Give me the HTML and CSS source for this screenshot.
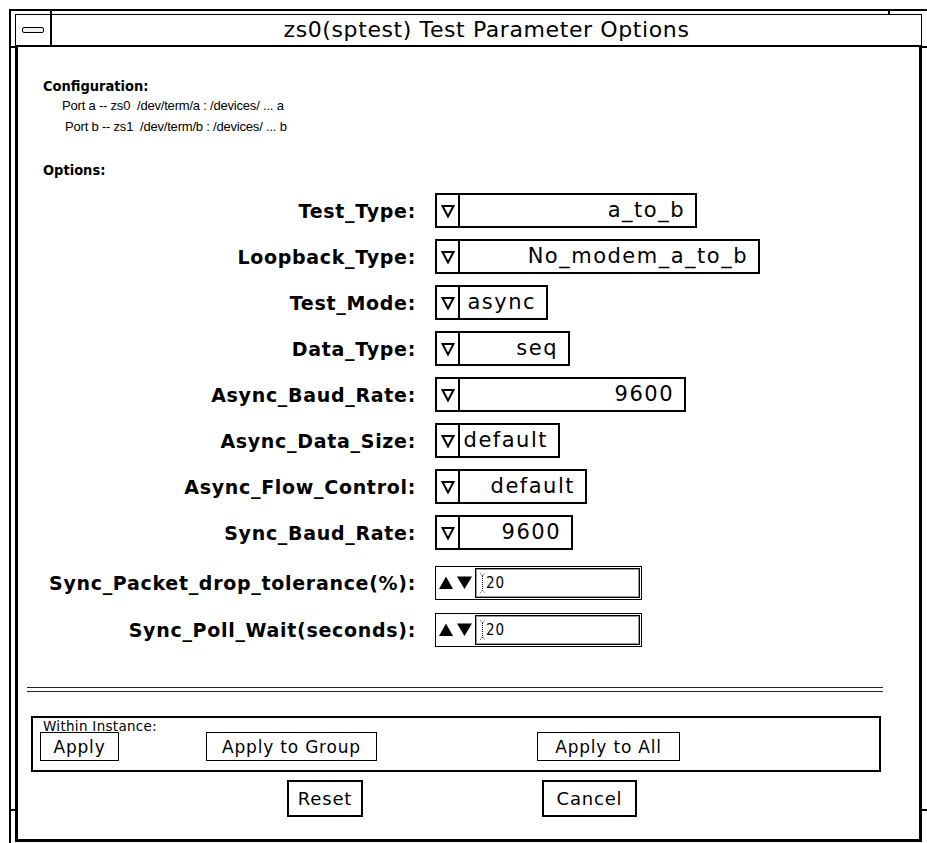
FILE: index.html
```html
<!DOCTYPE html>
<html lang="en">
<head>
    <meta charset="utf-8">
    <title>zs0(sptest) Test Parameter Options</title>
    <link rel="stylesheet" href="styles.css">
</head>
<body>
    <div class="frame">
        <span class="tick tick-top left"></span>
        <span class="tick tick-top right"></span>
        <span class="tick tick-side left upper"></span>
        <span class="tick tick-side left lower"></span>
        <span class="tick tick-side right upper"></span>
        <span class="tick tick-side right lower"></span>

        <div class="titlebar">
            <div class="menu-btn"><span></span></div>
            <div class="title">zs0(sptest) Test Parameter Options</div>
        </div>

        <div class="panel">
            <div class="config">
                <div class="heading">Configuration:</div>
                <div class="port">Port a -- zs0&nbsp; /dev/term/a : /devices/ ... a</div>
                <div class="port port-b">Port b -- zs1&nbsp; /dev/term/b : /devices/ ... b</div>
                <div class="heading options-head">Options:</div>
            </div>

            <div class="opts">
                <div class="label">Test_Type:</div>
                <div class="choice" style="width: 262px">
                    <span class="arrow"><svg width="14" height="14" viewBox="0 0 14 14"><polygon points="1.5,2 12.5,2 7,12.5" fill="none" stroke="#000" stroke-width="2"/></svg></span>
                    <span class="value">a_to_b</span>
                </div>

                <div class="label">Loopback_Type:</div>
                <div class="choice" style="width: 325px">
                    <span class="arrow"><svg width="14" height="14" viewBox="0 0 14 14"><polygon points="1.5,2 12.5,2 7,12.5" fill="none" stroke="#000" stroke-width="2"/></svg></span>
                    <span class="value">No_modem_a_to_b</span>
                </div>

                <div class="label">Test_Mode:</div>
                <div class="choice" style="width: 113px">
                    <span class="arrow"><svg width="14" height="14" viewBox="0 0 14 14"><polygon points="1.5,2 12.5,2 7,12.5" fill="none" stroke="#000" stroke-width="2"/></svg></span>
                    <span class="value">async</span>
                </div>

                <div class="label">Data_Type:</div>
                <div class="choice" style="width: 135px">
                    <span class="arrow"><svg width="14" height="14" viewBox="0 0 14 14"><polygon points="1.5,2 12.5,2 7,12.5" fill="none" stroke="#000" stroke-width="2"/></svg></span>
                    <span class="value">seq</span>
                </div>

                <div class="label">Async_Baud_Rate:</div>
                <div class="choice" style="width: 251px">
                    <span class="arrow"><svg width="14" height="14" viewBox="0 0 14 14"><polygon points="1.5,2 12.5,2 7,12.5" fill="none" stroke="#000" stroke-width="2"/></svg></span>
                    <span class="value">9600</span>
                </div>

                <div class="label">Async_Data_Size:</div>
                <div class="choice" style="width: 125px">
                    <span class="arrow"><svg width="14" height="14" viewBox="0 0 14 14"><polygon points="1.5,2 12.5,2 7,12.5" fill="none" stroke="#000" stroke-width="2"/></svg></span>
                    <span class="value">default</span>
                </div>

                <div class="label">Async_Flow_Control:</div>
                <div class="choice" style="width: 152px">
                    <span class="arrow"><svg width="14" height="14" viewBox="0 0 14 14"><polygon points="1.5,2 12.5,2 7,12.5" fill="none" stroke="#000" stroke-width="2"/></svg></span>
                    <span class="value">default</span>
                </div>

                <div class="label">Sync_Baud_Rate:</div>
                <div class="choice" style="width: 138px">
                    <span class="arrow"><svg width="14" height="14" viewBox="0 0 14 14"><polygon points="1.5,2 12.5,2 7,12.5" fill="none" stroke="#000" stroke-width="2"/></svg></span>
                    <span class="value">9600</span>
                </div>
            </div>

            <div class="opts spins">
                <div class="label">Sync_Packet_drop_tolerance(%):</div>
                <div class="spin">
                    <svg class="arrows" width="36" height="14" viewBox="0 0 36 14"><polygon points="1,13 8,0.5 15,13" fill="#000"/><polygon points="19,0.5 34,0.5 26.5,13" fill="#000"/></svg>
                    <div class="field">
                        <svg class="caret" width="5" height="20" viewBox="0 0 5 20"><path d="M0.5 0.5 L2.5 3 L4.5 0.5 M2.5 3 V17 M0.5 19.5 L2.5 17 L4.5 19.5" fill="none" stroke="#000" stroke-width="1" stroke-dasharray="1 1"/></svg>
                        <span>20</span>
                    </div>
                </div>

                <div class="label">Sync_Poll_Wait(seconds):</div>
                <div class="spin">
                    <svg class="arrows" width="36" height="14" viewBox="0 0 36 14"><polygon points="1,13 8,0.5 15,13" fill="#000"/><polygon points="19,0.5 34,0.5 26.5,13" fill="#000"/></svg>
                    <div class="field">
                        <svg class="caret" width="5" height="20" viewBox="0 0 5 20"><path d="M0.5 0.5 L2.5 3 L4.5 0.5 M2.5 3 V17 M0.5 19.5 L2.5 17 L4.5 19.5" fill="none" stroke="#000" stroke-width="1" stroke-dasharray="1 1"/></svg>
                        <span>20</span>
                    </div>
                </div>
            </div>

            <div class="rule"></div>

            <div class="instance">
                <div class="instance-title">Within Instance:</div>
                <div class="instance-buttons">
                    <button class="btn btn-apply">Apply</button>
                    <button class="btn btn-group">Apply to Group</button>
                    <button class="btn btn-all">Apply to All</button>
                </div>
            </div>

            <div class="actions">
                <button class="btn btn-main btn-reset">Reset</button>
                <button class="btn btn-main btn-cancel">Cancel</button>
            </div>
        </div>
    </div>
</body>
</html>
```

FILE: styles.css
```css
* {
    box-sizing: border-box;
}
html, body {
    margin: 0;
    padding: 0;
    background-color: #fff;
    overflow: hidden;
}
body {
    font-family: "DejaVu Sans", sans-serif;
    color: #000;
    height: 843px;
}
.frame {
    position: relative;
    margin: 9px 0 0 9px;
    border-top: 2px solid #000;
    border-left: 2px solid #000;
    padding: 3px 0 0 4px;
    height: 834px;
}
.tick {
    position: absolute;
    background-color: #000;
}
.tick-top {
    top: 0;
    width: 2px;
    height: 3px;
}
.tick-top.left {
    left: 39px;
}
.tick-top.right {
    left: 877px;
}
.tick-side {
    height: 2px;
}
.tick-side.left {
    left: 0;
    width: 4px;
}
.tick-side.right {
    left: 911px;
    width: 20px;
}
.tick-side.upper {
    top: 35px;
}
.tick-side.lower {
    top: 798px;
}

/* title bar */
.titlebar {
    display: flex;
    width: 907px;
    height: 33px;
    border: 1px solid #000;
    border-bottom: 2px solid #000;
}
.menu-btn {
    width: 36px;
    border-right: 2px solid #000;
    display: flex;
    align-items: center;
    justify-content: center;
}
.menu-btn span {
    width: 22px;
    height: 6px;
    border: 1px solid #000;
    border-radius: 2px;
    background-color: #eee;
}
.title {
    flex: 1;
    text-align: center;
    font-size: 22px;
    letter-spacing: 0.6px;
    line-height: 30px;
}

/* main panel */
.panel {
    width: 907px;
    height: 795px;
    border: 3px solid #000;
    border-top: 0;
    padding-top: 30px;
}
.config {
    padding-left: 25px;
}
.heading {
    font-family: "DejaVu Sans Condensed", "DejaVu Sans", sans-serif;
    font-stretch: condensed;
    font-weight: bold;
    font-size: 14.5px;
    line-height: 18px;
}
.port {
    font-family: "Liberation Sans", sans-serif;
    font-size: 13px;
    letter-spacing: -0.2px;
    line-height: 21px;
    padding-left: 19px;
}
.port-b {
    padding-left: 22px;
}
.options-head {
    margin-top: 24px;
}

.opts {
    display: grid;
    grid-template-columns: 398px auto;
    column-gap: 19px;
    row-gap: 11px;
    align-items: center;
    justify-items: start;
    margin-top: 14px;
}
.opts .label {
    justify-self: end;
    font-weight: bold;
    font-size: 19px;
    letter-spacing: 0.7px;
}
.choice {
    display: flex;
    height: 35px;
    border: 2px solid #000;
}
.choice .arrow {
    width: 23px;
    border-right: 2px solid #000;
    display: flex;
    align-items: center;
    justify-content: center;
}
.choice .value {
    flex: 1;
    text-align: right;
    padding-right: 10px;
    font-size: 21px;
    letter-spacing: 1.5px;
    line-height: 31px;
}

.spins {
    margin-top: 16px;
    row-gap: 13px;
}
.spin {
    display: flex;
    align-items: center;
    width: 207px;
    height: 34px;
    border: 1px solid #000;
    padding: 1px;
}
.spin .arrows {
    margin: 0 1px 0 1px;
}
.field {
    flex: 1;
    height: 30px;
    display: flex;
    align-items: center;
    border: 1px solid #000;
    box-shadow: inset 0 0 0 1px #999;
    padding-left: 4px;
    font-family: "DejaVu Sans Condensed", "DejaVu Sans", sans-serif;
    font-weight: 300;
    font-size: 15px;
    letter-spacing: 1px;
}
.field .caret {
    margin-right: 1px;
}

.rule {
    margin: 40px 0 0 9px;
    width: 856px;
    height: 5px;
    border-top: 1px solid #222;
    border-bottom: 1px solid #222;
}

.instance {
    margin: 24px 0 0 13px;
    width: 850px;
    height: 56px;
    border: 2px solid #000;
    padding: 2px 0 0 10px;
}
.instance-title {
    font-size: 13.5px;
    letter-spacing: 0.3px;
    line-height: 12px;
}
.instance-buttons {
    display: flex;
    margin: 0 0 0 -3px;
}
.btn {
    height: 29px;
    padding: 0;
    background-color: #fff;
    border: 1px solid #000;
    color: #000;
    font-family: "DejaVu Sans", sans-serif;
    font-size: 17px;
    letter-spacing: 0.8px;
}
.btn-apply {
    width: 79px;
}
.btn-group {
    width: 171px;
    margin-left: 87px;
}
.btn-all {
    width: 143px;
    margin-left: 160px;
}
.actions {
    display: flex;
    margin-top: 8px;
    padding-left: 269px;
}
.btn-main {
    height: 37px;
    border: 2px solid #000;
    font-size: 18px;
}
.btn-reset {
    width: 76px;
}
.btn-cancel {
    width: 95px;
    margin-left: 179px;
}
```
